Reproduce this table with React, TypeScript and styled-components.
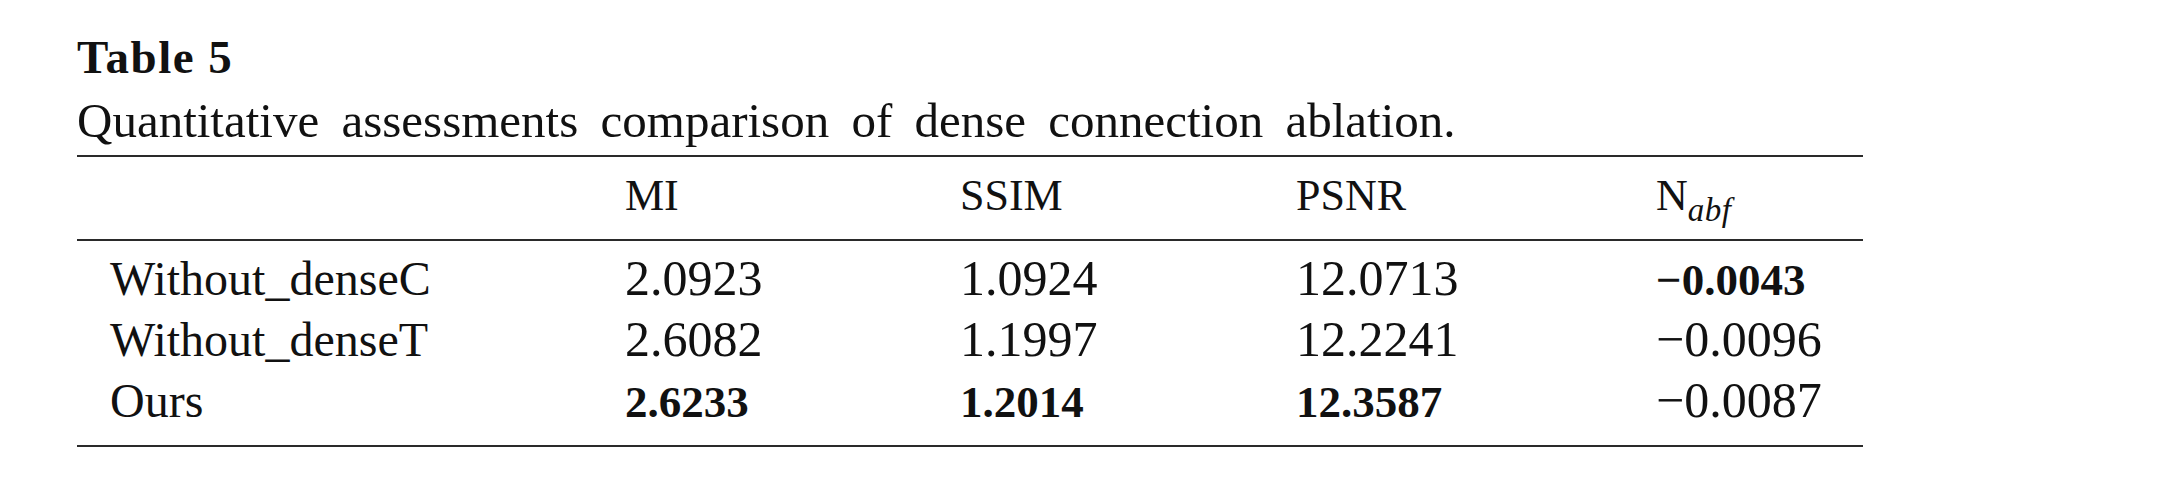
import React from "react";
import styled, { createGlobalStyle } from "styled-components";

const Global = createGlobalStyle`
  html, body { margin: 0; padding: 0; background: #ffffff; }
  body { font-family: "Liberation Serif", "Times New Roman", serif; color: #111111; }
`;

const Page = styled.div`
  padding: 27px 0 0 77px;
  width: 1786px;
`;

const Title = styled.div`
  font-size: 47px;
  font-weight: 700;
  letter-spacing: 1.5px;
  line-height: 60px;
  height: 60px;
`;

const Caption = styled.div`
  font-size: 49px;
  line-height: 68px;
  word-spacing: 10px;
  white-space: nowrap;
`;

const cols = "548px 335px 336px 360px 207px";

const Head = styled.div`
  display: grid;
  grid-template-columns: ${cols};
  border-top: 2px solid #2a2a2a;
  border-bottom: 2px solid #2a2a2a;
  height: 82px;
  box-sizing: content-box;
  align-items: start;
`;

const HeadCell = styled.div`
  font-size: 44px;
  line-height: 78px;
  white-space: nowrap;
`;

const Sub = styled.span`
  font-style: italic;
  font-size: 33px;
  vertical-align: -11px;
  line-height: 0;
  letter-spacing: 0.5px;
`;

const Body = styled.div`
  padding: 7px 0 14px;
  border-bottom: 2px solid #2a2a2a;
`;

const Row = styled.div`
  display: grid;
  grid-template-columns: ${cols};
  height: 61px;
  align-items: baseline;
`;

const Label = styled.div`
  font-size: 48px;
  line-height: 61px;
  padding-left: 33px;
  white-space: nowrap;
`;

const Num = styled.div<{ $bold?: boolean }>`
  font-size: ${(p) => (p.$bold ? "45px" : "50px")};
  font-weight: ${(p) => (p.$bold ? 700 : 400)};
  line-height: 61px;
  white-space: nowrap;
`;

type Cell = { v: string; b?: boolean };
const rows: { label: string; cells: Cell[] }[] = [
  {
    label: "Without_denseC",
    cells: [{ v: "2.0923" }, { v: "1.0924" }, { v: "12.0713" }, { v: "\u22120.0043", b: true }],
  },
  {
    label: "Without_denseT",
    cells: [{ v: "2.6082" }, { v: "1.1997" }, { v: "12.2241" }, { v: "\u22120.0096" }],
  },
  {
    label: "Ours",
    cells: [{ v: "2.6233", b: true }, { v: "1.2014", b: true }, { v: "12.3587", b: true }, { v: "\u22120.0087" }],
  },
];

export default function App() {
  return (
    <>
      <Global />
      <Page>
        <Title>Table 5</Title>
        <Caption>Quantitative assessments comparison of dense connection ablation.</Caption>
        <Head>
          <HeadCell />
          <HeadCell>MI</HeadCell>
          <HeadCell>SSIM</HeadCell>
          <HeadCell>PSNR</HeadCell>
          <HeadCell>
            N<Sub>abf</Sub>
          </HeadCell>
        </Head>
        <Body>
          {rows.map((r) => (
            <Row key={r.label}>
              <Label>{r.label}</Label>
              {r.cells.map((c, i) => (
                <Num key={i} $bold={c.b}>
                  {c.v}
                </Num>
              ))}
            </Row>
          ))}
        </Body>
      </Page>
    </>
  );
}
